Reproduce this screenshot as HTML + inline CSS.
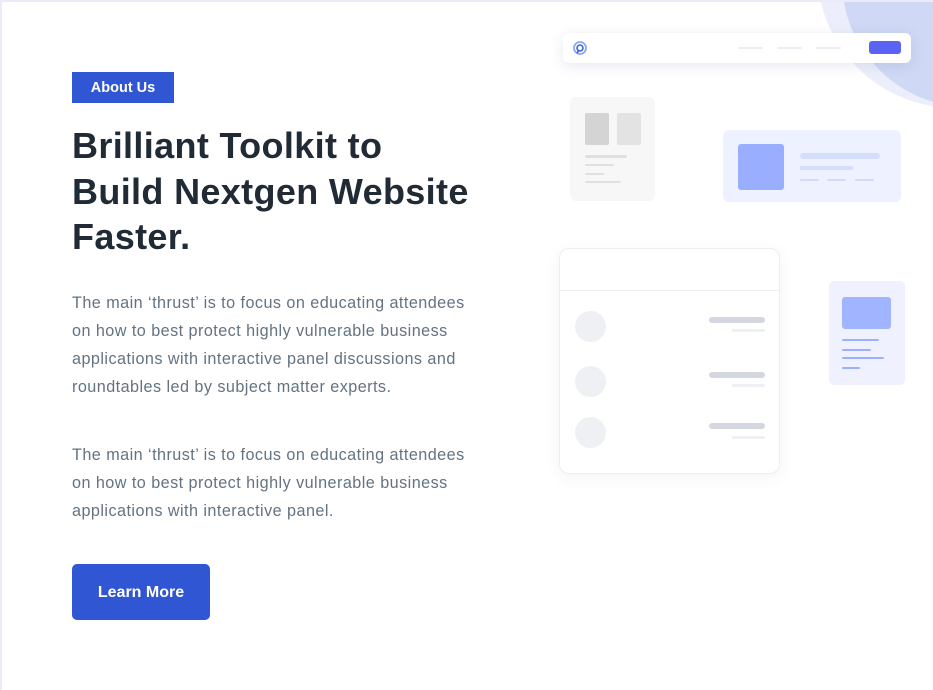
<!DOCTYPE html>
<html><head><meta charset="utf-8"><style>
*{margin:0;padding:0;box-sizing:border-box}
body{width:933px;height:690px;overflow:hidden;background:#fff;font-family:"Liberation Sans",sans-serif;position:relative}
.a{position:absolute}
.frame{left:0;top:0;width:933px;height:690px;border-left:2px solid #eceaf9;border-top:2px solid #eceaf9}
.badge{left:72px;top:72px;width:102px;height:31px;background:#3056d3;color:#fff;font-weight:bold;font-size:14.5px;line-height:32px;text-align:center}
h1{position:absolute;left:72px;top:123px;font-size:36px;line-height:45.5px;color:#212b36;font-weight:bold;letter-spacing:0.35px}
.p{left:72px;font-size:16.2px;line-height:28px;color:#637381;letter-spacing:0.45px}
.btn{left:72px;top:564px;width:138px;height:56px;background:#3056d3;border-radius:5px;color:#fff;font-weight:bold;font-size:16px;line-height:57px;text-align:center}
.l{position:absolute;border-radius:2px}
</style></head><body>
<div class="a" style="left:817px;top:-168px;width:276px;height:276px;border-radius:50%;background:#eceffb"></div>
<div class="a" style="left:842px;top:-147px;width:254px;height:254px;border-radius:50%;background:#cfd8f4"></div>
<div class="a frame"></div>
<div class="a badge">About Us</div>
<h1>Brilliant Toolkit to<br>Build Nextgen Website<br>Faster.</h1>
<div class="a p" style="top:289px">The main ‘thrust’ is to focus on educating attendees<br>on how to best protect highly vulnerable business<br>applications with interactive panel discussions and<br>roundtables led by subject matter experts.</div>
<div class="a p" style="top:441px">The main ‘thrust’ is to focus on educating attendees<br>on how to best protect highly vulnerable business<br>applications with interactive panel.</div>
<div class="a btn">Learn More</div>

<!-- navbar -->
<div class="a" style="left:563px;top:33px;width:348px;height:30px;background:#fff;border-radius:6px;box-shadow:0 3px 14px rgba(60,70,120,0.12)"></div>
<svg class="a" style="left:572px;top:40px" width="16" height="16" viewBox="0 0 16 16"><circle cx="8" cy="8" r="6" fill="none" stroke="#8fa8f2" stroke-width="1.8"/><circle cx="8" cy="8" r="3" fill="none" stroke="#3c64e0" stroke-width="1.6"/><path d="M5 13 L7 10" stroke="#3c64e0" stroke-width="1.6"/></svg>
<div class="l" style="left:738px;top:47px;width:25px;height:2px;background:#eceef3"></div>
<div class="l" style="left:777px;top:47px;width:25px;height:2px;background:#eceef3"></div>
<div class="l" style="left:816px;top:47px;width:25px;height:2px;background:#eceef3"></div>
<div class="l" style="left:869px;top:41px;width:32px;height:13px;background:#5b63f5;border-radius:3px"></div>

<!-- gray card -->
<div class="l" style="left:570px;top:97px;width:85px;height:104px;background:#f7f7f7;border-radius:6px"></div>
<div class="l" style="left:585px;top:113px;width:24px;height:32px;background:#d4d4d4"></div>
<div class="l" style="left:617px;top:113px;width:24px;height:32px;background:#e3e3e3"></div>
<div class="l" style="left:585px;top:155px;width:42px;height:3px;background:#e0e0e0"></div>
<div class="l" style="left:585px;top:164px;width:29px;height:2px;background:#e0e0e0"></div>
<div class="l" style="left:585px;top:173px;width:19px;height:2px;background:#e0e0e0"></div>
<div class="l" style="left:585px;top:181px;width:36px;height:2px;background:#e0e0e0"></div>

<!-- blue card -->
<div class="l" style="left:723px;top:130px;width:178px;height:72px;background:#eef1ff;border-radius:6px"></div>
<div class="l" style="left:738px;top:144px;width:46px;height:46px;background:#9aaeff;border-radius:3px"></div>
<div class="l" style="left:800px;top:153px;width:80px;height:6px;background:#d5defd;border-radius:3px"></div>
<div class="l" style="left:800px;top:166px;width:53px;height:4px;background:#d5defd"></div>
<div class="l" style="left:800px;top:179px;width:19px;height:2px;background:#d2dbfb"></div>
<div class="l" style="left:827px;top:179px;width:19px;height:2px;background:#d2dbfb"></div>
<div class="l" style="left:855px;top:179px;width:19px;height:2px;background:#d2dbfb"></div>

<!-- big card -->
<div class="l" style="left:559px;top:248px;width:221px;height:226px;background:#fff;border:1px solid #eeeef2;border-radius:10px;box-shadow:0 4px 16px rgba(60,70,120,0.06)"></div>
<div class="l" style="left:560px;top:290px;width:219px;height:1px;background:#eeeff3;border-radius:0"></div>
<div class="l" style="left:575px;top:311px;width:31px;height:31px;border-radius:50%;background:#eff0f4"></div>
<div class="l" style="left:575px;top:366px;width:31px;height:31px;border-radius:50%;background:#eff0f4"></div>
<div class="l" style="left:575px;top:417px;width:31px;height:31px;border-radius:50%;background:#eff0f4"></div>
<div class="l" style="left:709px;top:317px;width:56px;height:6px;background:#d4d7e0;border-radius:3px"></div>
<div class="l" style="left:732px;top:329px;width:33px;height:3px;background:#eef0f4"></div>
<div class="l" style="left:709px;top:372px;width:56px;height:6px;background:#d4d7e0;border-radius:3px"></div>
<div class="l" style="left:732px;top:384px;width:33px;height:3px;background:#eef0f4"></div>
<div class="l" style="left:709px;top:423px;width:56px;height:6px;background:#d4d7e0;border-radius:3px"></div>
<div class="l" style="left:732px;top:436px;width:33px;height:3px;background:#eef0f4"></div>

<!-- right card -->
<div class="l" style="left:829px;top:281px;width:76px;height:104px;background:#eff1ff;border-radius:5px"></div>
<div class="l" style="left:842px;top:297px;width:49px;height:32px;background:#a1b4ff;border-radius:3px"></div>
<div class="l" style="left:842px;top:339px;width:37px;height:2px;background:#9db0ff"></div>
<div class="l" style="left:842px;top:349px;width:29px;height:2px;background:#9db0ff"></div>
<div class="l" style="left:842px;top:357px;width:42px;height:2px;background:#9db0ff"></div>
<div class="l" style="left:842px;top:367px;width:18px;height:2px;background:#9db0ff"></div>
</body></html>
